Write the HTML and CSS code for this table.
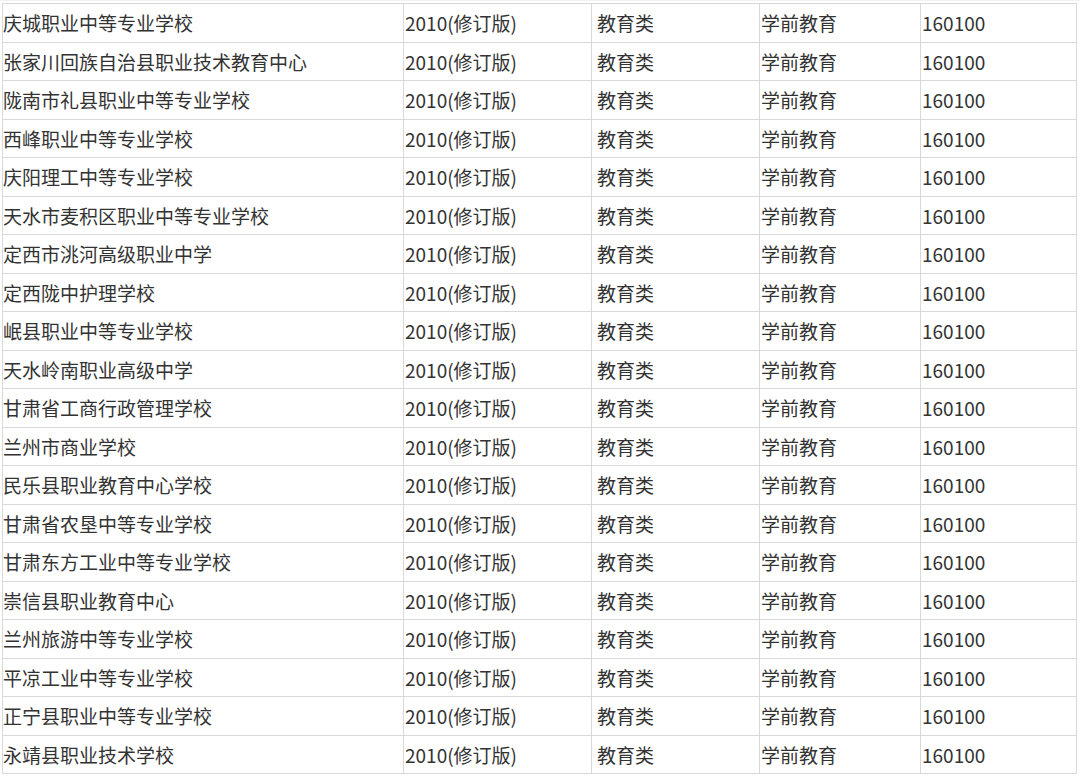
FILE: index.html
```html
<!DOCTYPE html>
<html lang="zh">
<head>
<meta charset="utf-8">
<title>学校列表</title>
<link rel="stylesheet" href="styles.css">
</head>
<body>
<div class="sheet">
  <div class="grid">
    <div class="c c1">庆城职业中等专业学校</div><div class="c c2">2010(修订版)</div><div class="c c3">教育类</div><div class="c c4">学前教育</div><div class="c c5">160100</div>
    <div class="c c1">张家川回族自治县职业技术教育中心</div><div class="c c2">2010(修订版)</div><div class="c c3">教育类</div><div class="c c4">学前教育</div><div class="c c5">160100</div>
    <div class="c c1">陇南市礼县职业中等专业学校</div><div class="c c2">2010(修订版)</div><div class="c c3">教育类</div><div class="c c4">学前教育</div><div class="c c5">160100</div>
    <div class="c c1">西峰职业中等专业学校</div><div class="c c2">2010(修订版)</div><div class="c c3">教育类</div><div class="c c4">学前教育</div><div class="c c5">160100</div>
    <div class="c c1">庆阳理工中等专业学校</div><div class="c c2">2010(修订版)</div><div class="c c3">教育类</div><div class="c c4">学前教育</div><div class="c c5">160100</div>
    <div class="c c1">天水市麦积区职业中等专业学校</div><div class="c c2">2010(修订版)</div><div class="c c3">教育类</div><div class="c c4">学前教育</div><div class="c c5">160100</div>
    <div class="c c1">定西市洮河高级职业中学</div><div class="c c2">2010(修订版)</div><div class="c c3">教育类</div><div class="c c4">学前教育</div><div class="c c5">160100</div>
    <div class="c c1">定西陇中护理学校</div><div class="c c2">2010(修订版)</div><div class="c c3">教育类</div><div class="c c4">学前教育</div><div class="c c5">160100</div>
    <div class="c c1">岷县职业中等专业学校</div><div class="c c2">2010(修订版)</div><div class="c c3">教育类</div><div class="c c4">学前教育</div><div class="c c5">160100</div>
    <div class="c c1">天水岭南职业高级中学</div><div class="c c2">2010(修订版)</div><div class="c c3">教育类</div><div class="c c4">学前教育</div><div class="c c5">160100</div>
    <div class="c c1">甘肃省工商行政管理学校</div><div class="c c2">2010(修订版)</div><div class="c c3">教育类</div><div class="c c4">学前教育</div><div class="c c5">160100</div>
    <div class="c c1">兰州市商业学校</div><div class="c c2">2010(修订版)</div><div class="c c3">教育类</div><div class="c c4">学前教育</div><div class="c c5">160100</div>
    <div class="c c1">民乐县职业教育中心学校</div><div class="c c2">2010(修订版)</div><div class="c c3">教育类</div><div class="c c4">学前教育</div><div class="c c5">160100</div>
    <div class="c c1">甘肃省农垦中等专业学校</div><div class="c c2">2010(修订版)</div><div class="c c3">教育类</div><div class="c c4">学前教育</div><div class="c c5">160100</div>
    <div class="c c1">甘肃东方工业中等专业学校</div><div class="c c2">2010(修订版)</div><div class="c c3">教育类</div><div class="c c4">学前教育</div><div class="c c5">160100</div>
    <div class="c c1">崇信县职业教育中心</div><div class="c c2">2010(修订版)</div><div class="c c3">教育类</div><div class="c c4">学前教育</div><div class="c c5">160100</div>
    <div class="c c1">兰州旅游中等专业学校</div><div class="c c2">2010(修订版)</div><div class="c c3">教育类</div><div class="c c4">学前教育</div><div class="c c5">160100</div>
    <div class="c c1">平凉工业中等专业学校</div><div class="c c2">2010(修订版)</div><div class="c c3">教育类</div><div class="c c4">学前教育</div><div class="c c5">160100</div>
    <div class="c c1">正宁县职业中等专业学校</div><div class="c c2">2010(修订版)</div><div class="c c3">教育类</div><div class="c c4">学前教育</div><div class="c c5">160100</div>
    <div class="c c1">永靖县职业技术学校</div><div class="c c2">2010(修订版)</div><div class="c c3">教育类</div><div class="c c4">学前教育</div><div class="c c5">160100</div>
  </div>
</div>
</body>
</html>
```
FILE: styles.css
```css
html, body {
  margin: 0;
  padding: 0;
  background: #ffffff;
}
.sheet {
  width: 1080px;
  height: 778px;
  overflow: hidden;
  box-sizing: border-box;
  padding: 2px 0 0 2px;
  background: #ffffff;
  border-top: 1px solid #f1f1f1;
}
.grid {
  display: grid;
  grid-template-columns: 401px 188px 168px 161px 156px;
  grid-auto-rows: 38.5px;
  border-top: 1px solid #d9d9d9;
  border-left: 1px solid #d9d9d9;
  width: max-content;
  font-family: "Noto Sans CJK SC", "Noto Sans", sans-serif;
  font-size: 19px;
  color: #333333;
}
.c {
  box-sizing: border-box;
  border-right: 1px solid #d9d9d9;
  border-bottom: 1px solid #d9d9d9;
  display: flex;
  align-items: center;
  white-space: nowrap;
  overflow: hidden;
  line-height: 1;
}
.c1 { padding-left: 0; }
.c2 { padding-left: 1px; }
.c3 { padding-left: 5px; }
.c4 { padding-left: 1px; }
.c5 { padding-left: 1px; }
```
